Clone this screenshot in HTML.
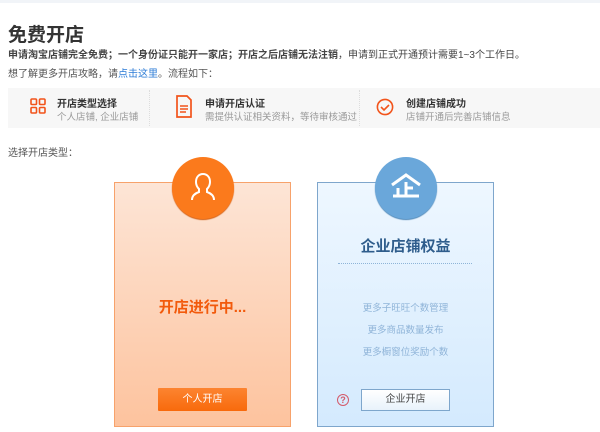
<!DOCTYPE html>
<html><head><meta charset="utf-8"><style>
*{margin:0;padding:0;box-sizing:border-box}
body{width:600px;height:432px;background:#fff;font-family:"Liberation Sans","Noto Sans CJK SC",sans-serif;position:relative;overflow:hidden;color:#333}
.a{position:absolute;white-space:nowrap}
</style></head><body>
<div class="a" style="left:0;top:0;width:600px;height:3px;background:#f1f4f8"></div>
<div class="a" style="left:8px;top:20px;font-size:19px;font-weight:bold;color:#333">免费开店</div>
<div class="a" style="left:8px;top:46px;font-size:10px;color:#444"><b>申请淘宝店铺完全免费；一个身份证只能开一家店；开店之后店铺无法注销</b>，申请到正式开通预计需要1~3个工作日。</div>
<div class="a" style="left:8px;top:65px;font-size:10px;color:#555">想了解更多开店攻略，请<span style="color:#2b7bd6">点击这里</span>。流程如下：</div>
<div class="a" style="left:8px;top:88px;width:592px;height:40px;background:#f7f7f7"></div>
<div class="a" style="left:149px;top:90px;width:1px;height:36px;border-left:1px dotted #ddd"></div>
<div class="a" style="left:359px;top:90px;width:1px;height:36px;border-left:1px dotted #ddd"></div>
<svg class="a" style="left:30px;top:97px" width="16" height="20" viewBox="0 0 16 20"><g fill="none" stroke="#f2541b" stroke-width="1.6"><rect x="1" y="2" width="5.5" height="5.5" rx="1"/><rect x="9.5" y="2" width="5.5" height="5.5" rx="1"/><rect x="1" y="10.5" width="5.5" height="5.5" rx="1"/><rect x="9.5" y="10.5" width="5.5" height="5.5" rx="1"/></g></svg>
<div class="a" style="left:57px;top:95px;font-size:10px;font-weight:bold;color:#333">开店类型选择</div>
<div class="a" style="left:57px;top:109px;font-size:9.5px;color:#999">个人店铺, 企业店铺</div>
<svg class="a" style="left:175px;top:95px" width="18" height="24" viewBox="0 0 18 24"><path d="M2 1h10l4 4v17H2z" fill="none" stroke="#f2541b" stroke-width="1.7"/><path d="M5 11h8M5 14h8M5 17h6" stroke="#f2541b" stroke-width="1.5"/></svg>
<div class="a" style="left:205px;top:95px;font-size:10px;font-weight:bold;color:#333">申请开店认证</div>
<div class="a" style="left:205px;top:109px;font-size:9.5px;color:#999">需提供认证相关资料，等待审核通过</div>
<svg class="a" style="left:376px;top:98px" width="18" height="18" viewBox="0 0 18 18"><circle cx="9" cy="9" r="7.6" fill="none" stroke="#f2541b" stroke-width="1.6"/><path d="M5 9l3 3 5-5" fill="none" stroke="#f2541b" stroke-width="1.6"/></svg>
<div class="a" style="left:406px;top:95px;font-size:10px;font-weight:bold;color:#333">创建店铺成功</div>
<div class="a" style="left:406px;top:109px;font-size:9.5px;color:#999">店铺开通后完善店铺信息</div>
<div class="a" style="left:8px;top:144px;font-size:10px;color:#555">选择开店类型：</div>

<div class="a" style="left:114px;top:182px;width:177px;height:245px;border:1px solid #f7a26b;background:linear-gradient(#fde5d6,#fdc39e)"></div>
<div class="a" style="left:172px;top:157px;width:62px;height:62px;border-radius:50%;background:#fb7a1c;box-shadow:0 1px 1px #d45e10"></div>
<svg class="a" style="left:189px;top:172px" width="28" height="30" viewBox="0 0 28 30"><path d="M3 28c0-5 4-7 7-8v-3c-2-2-3-4-3-7 0-5 3-8 7-8s7 3 7 8c0 3-1 5-3 7v3c3 1 7 3 7 8" fill="none" stroke="#fff" stroke-width="2"/></svg>
<div class="a" style="left:114px;top:296px;width:177px;text-align:center;font-size:15px;font-weight:bold;color:#f25a0c">开店进行中...</div>
<div class="a" style="left:158px;top:388px;width:89px;height:23px;background:linear-gradient(#fc8430,#f86a0c);border-radius:1px;color:#fff;font-size:10px;text-align:center;line-height:23px">个人开店</div>

<div class="a" style="left:317px;top:182px;width:177px;height:245px;border:1px solid #7ea6cc;background:linear-gradient(#eef7ff,#d4eafe)"></div>
<div class="a" style="left:375px;top:157px;width:62px;height:62px;border-radius:50%;background:#6aa7da;box-shadow:0 1px 1px #4d87b8"></div>
<svg class="a" style="left:389px;top:173px" width="34" height="26" viewBox="0 0 34 26"><path d="M3 12L17 2l14 10" fill="none" stroke="#fff" stroke-width="3"/><path d="M17 9v14M9 15v8M17 15h7M4 23h26" stroke="#fff" stroke-width="3" fill="none"/></svg>
<div class="a" style="left:317px;top:235px;width:177px;text-align:center;font-size:15px;font-weight:bold;color:#2f5d8c">企业店铺权益</div>
<div class="a" style="left:338px;top:263px;width:134px;border-top:1px dotted #8fb4d8"></div>
<div class="a" style="left:317px;top:298px;width:177px;text-align:center;font-size:9.5px;color:#8fb4d8;line-height:22px">更多子旺旺个数管理<br>更多商品数量发布<br>更多橱窗位奖励个数</div>
<div class="a" style="left:337px;top:394px;width:12px;height:12px;border:1px solid #d45a6a;border-radius:50%;color:#d45a6a;font-size:9px;line-height:10px;text-align:center;font-weight:bold">?</div>
<div class="a" style="left:361px;top:389px;width:89px;height:22px;border:1px solid #7ea6cc;background:linear-gradient(#fff,#e8f2fb);font-size:10px;color:#444;text-align:center;line-height:20px">企业开店</div>
</body></html>
